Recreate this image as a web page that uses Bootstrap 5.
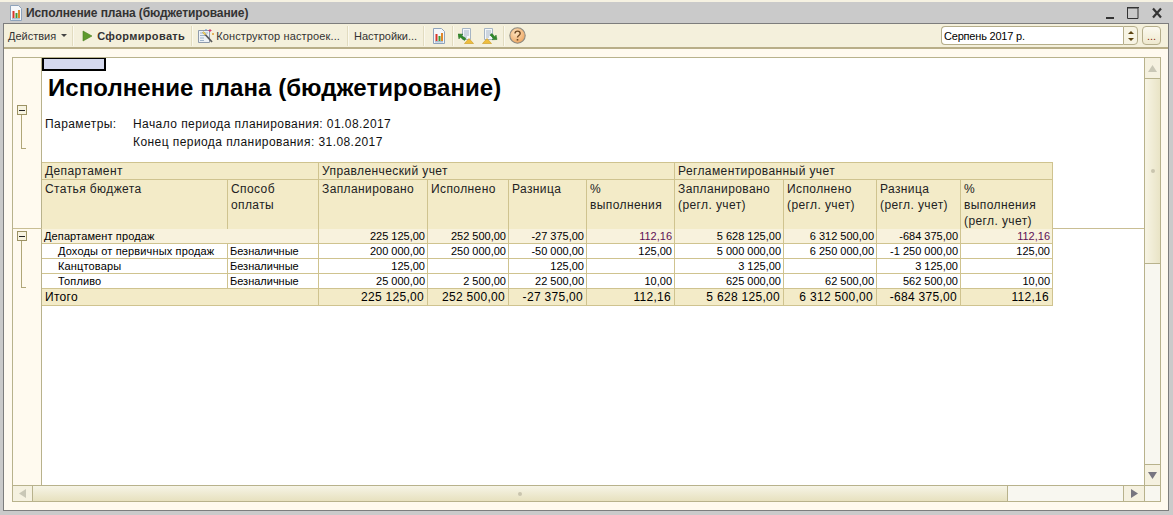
<!DOCTYPE html>
<html lang="ru">
<head>
    <meta charset="UTF-8">
    <meta name="viewport" content="width=device-width, initial-scale=1.0">
    <title>Исполнение плана (бюджетирование)</title>
    <link href="https://cdn.jsdelivr.net/npm/bootstrap@5.3.0/dist/css/bootstrap.min.css" rel="stylesheet">

    <style>
        html, body {
            height: 100%;
            overflow: hidden;
        }
        body {
            font-family: "Liberation Sans", Arial, sans-serif;
            font-size: 11px;
            color: #000;
            background-color: #cacaca;
        }
        .app-window {
            height: 515px;
            border-top: 2px solid #f6f2e2;
            padding: 0 4px 4px 3px;
        }
        .title-bar {
            height: 21px;
            flex: none;
            padding-left: 6px;
            color: #333;
            font-weight: bold;
            font-size: 12px;
            letter-spacing: -.1px;
        }
        .title-bar svg { margin-right: 3px; }
        .win-controls { margin-right: 3px; gap: 9px; }
        .form-body {
            border: 1px solid #7d7d7d;
            background-color: #fffaef;
            min-height: 0;
        }
        .tool-bar {
            height: 25px;
            flex: none;
            background-color: #f4f0dc;
            border-bottom: 2px solid #b8ae88;
            padding-left: 4px;
            padding-right: 6px;
        }
        .tool-btn {
            border: 0;
            border-radius: 0;
            padding: 0;
            font-size: 11px;
            line-height: 14px;
            color: #333;
            display: inline-flex;
            align-items: center;
            white-space: nowrap;
        }
        .tool-btn.dropdown-toggle::after {
            margin-left: 5px;
            border-top-width: 3px;
            border-left-width: 3px;
            border-right-width: 3px;
            border-top-color: #444;
            vertical-align: middle;
        }
        .run-btn { letter-spacing: .35px; }
        .wizard-btn { letter-spacing: .13px; }
        .wizard-btn svg { margin-right: 2px; }
        .tool-sep {
            width: 2px;
            height: 20px;
            flex: none;
            background-color: #e2dcc0;
            border-right: 1px solid #fbf9ee;
        }
        .sp-5 { margin-left: 5px; }
        .sp-6 { margin-left: 6px; }
        .sp-7 { margin-left: 7px; }
        .sp-8 { margin-left: 8px; }
        .sp-4 { margin-left: 4px; }
        .date-group { margin-right: 1px; }
        .date-input.form-control {
            width: 182px;
            height: 19px;
            padding: 0 2px;
            font-size: 11px;
            line-height: 17px;
            letter-spacing: -.2px;
            color: #000;
            border: 1px solid #b5ae8b;
            border-right: 0;
            border-radius: 4px 0 0 4px;
        }
        .date-spin {
            width: 15px;
            height: 19px;
            border: 1px solid #b5ae8b;
            border-radius: 0 4px 4px 0;
            background-color: #f7f4e4;
        }
        .spin-up, .spin-down {
            width: 0;
            height: 0;
            border-left: 3px solid transparent;
            border-right: 3px solid transparent;
        }
        .spin-up { border-bottom: 3px solid #5c4410; }
        .spin-down { border-top: 3px solid #5c4410; }
        .dots-btn {
            width: 19px;
            height: 19px;
            margin-left: 4px;
            border: 1px solid #b5ae8b;
            border-radius: 4px;
            background: linear-gradient(#fbf9ef, #efe9cf);
            color: #8a2b12;
            font-size: 11px;
            line-height: 12px;
            text-align: center;
        }
        .form-area {
            padding: 8px 7px 8px 8px;
            min-height: 0;
        }
        .sheet-frame {
            height: 100%;
            border: 1px solid #b8b28c;
            display: grid;
            grid-template-columns: 1fr 16px;
            grid-template-rows: 1fr 16px;
            background-color: #fff;
        }
        .sheet-view { min-width: 0; min-height: 0; }
        .sheet-top {
            height: 171px;
            flex: none;
            border-bottom: 1px solid #c9be94;
        }
        .gutter-col {
            width: 29px;
            flex: none;
            background-color: #fffaef;
            border-right: 1px solid #b8b28c;
            padding-left: 4px;
        }
        .gutter-top { padding-top: 47px; }
        .gutter-bottom { padding-top: 2px; }
        .fold-box {
            width: 10px;
            height: 10px;
            border: 1px solid #9c9264;
            background-color: #f7f3e0;
            display: flex;
            align-items: center;
            justify-content: center;
        }
        .fold-box::before {
            content: "";
            width: 6px;
            height: 1px;
            background-color: #222;
        }
        .fold-line {
            width: 5px;
            margin-left: 4px;
            border-left: 1px solid #b0a678;
            border-bottom: 1px solid #b0a678;
        }
        .gutter-top .fold-line { height: 34px; }
        .gutter-bottom .fold-line { height: 47px; }
        .sel-cell {
            width: 64px;
            height: 13px;
            flex: none;
            background-color: #d5d9ee;
            border: 2px solid #000;
            border-top-width: 1px;
        }
        .report-title {
            margin: 2px 0 0 6px;
            font-size: 24px;
            line-height: 30px;
            letter-spacing: .06px;
            font-weight: bold;
        }
        .report-params {
            margin: 12px 0 0 3px;
            font-size: 12px;
            line-height: 18px;
            letter-spacing: .43px;
            color: #111;
        }
        .param-label { width: 88px; }
        .report-table {
            table-layout: fixed;
            width: 1011px;
            border-collapse: separate;
            border-spacing: 0;
            color: #000;
        }
        .report-table col:nth-child(1) { width: 186px; }
        .report-table col:nth-child(2) { width: 91px; }
        .report-table col:nth-child(3) { width: 109px; }
        .report-table col:nth-child(4) { width: 81px; }
        .report-table col:nth-child(5) { width: 78px; }
        .report-table col:nth-child(6) { width: 88px; }
        .report-table col:nth-child(7) { width: 109px; }
        .report-table col:nth-child(8) { width: 93px; }
        .report-table col:nth-child(9) { width: 84px; }
        .report-table col:nth-child(10) { width: 92px; }
        .head-table {
            margin-top: 11px;
            background-color: #f3ebc8;
            font-size: 12px;
            line-height: 16px;
            letter-spacing: .4px;
            color: #222;
        }
        .head-table th {
            font-weight: normal;
            vertical-align: top;
            padding: 0 3px;
            border-right: 1px solid #cfc38f;
            white-space: nowrap;
        }
        .head-table .top-row th {
            height: 17px;
            border-top: 1px solid #cfc38f;
            border-bottom: 1px solid #cfc38f;
        }
        .head-table .sub-row th { height: 48px; padding-top: 1px; }
        .body-table td {
            height: 15px;
            padding: 0 2px;
            font-size: 11px;
            line-height: 14px;
            white-space: nowrap;
            border-right: 1px solid #cfc38f;
            border-bottom: 1px solid #cfc38f;
            color: #000;
        }
        .body-table .dept-row td { background-color: #f8f2dd; }
        .body-table .dept-name { letter-spacing: .12px; }
        .body-table .item-name { padding-left: 16px; letter-spacing: .15px; }
        .body-table .dept-row .pct-value { color: #5e1055; }
        .body-table .total-row td {
            height: 17px;
            background-color: #f3ebc8;
            font-size: 12px;
            line-height: 16px;
            letter-spacing: .3px;
            padding: 0 3px;
        }
        .v-scroll {
            border-left: 1px solid #b8b28c;
            background-color: #f8f7f0;
        }
        .scroll-btn {
            flex: none;
            background-color: #f5f1e0;
            display: flex;
            align-items: center;
            justify-content: center;
        }
        .v-scroll .scroll-btn { height: 21px; }
        .v-scroll .btn-up { border-bottom: 1px solid #b8b28c; }
        .v-scroll .btn-down { height: 21px; border-top: 1px solid #b8b28c; }
        .v-thumb {
            height: 185px;
            flex: none;
            background: linear-gradient(90deg, #f7f4e4, #e9e4c6);
            border-bottom: 1px solid #b8b28c;
        }
        .grip {
            width: 4px;
            height: 4px;
            border-radius: 50%;
            background-color: #c9c5ae;
        }
        .h-scroll {
            border-top: 1px solid #b8b28c;
            background-color: #f8f7f0;
        }
        .h-scroll .scroll-btn { width: 20px; }
        .h-scroll .btn-left { border-right: 1px solid #b8b28c; }
        .h-scroll .btn-right { width: 21px; border-left: 1px solid #b8b28c; }
        .h-thumb {
            width: 975px;
            flex: none;
            background: linear-gradient(#f6f4e6, #e7e1bf);
            border-right: 1px solid #b8b28c;
        }
        .scroll-corner {
            border-top: 1px solid #b8b28c;
            border-left: 1px solid #b8b28c;
            background-color: #f8f7f0;
        }
    </style>
</head>
<body>

<div class="app-window d-flex flex-column">
    <div class="title-bar d-flex align-items-center">
        <svg width="14" height="16" viewBox="0 0 14 16">
            <path d="M1.500 .5h8l3 3v12h-11z" fill="#f5f7fa" stroke="#8ea3bb"/>
            <path d="M3 13h8v1.500H3z" fill="#a9bdd2"/>
            <path d="M3.500 6h2v7h-2z" fill="#d8362a"/>
            <path d="M6.500 8h2v5h-2z" fill="#3f9a36"/>
            <path d="M9 5h2v8H9z" fill="#e0872a"/>
        </svg>
        <span>Исполнение плана (бюджетирование)</span>
        <div class="win-controls d-flex align-items-center ms-auto">
            <svg width="10" height="14" viewBox="0 0 10 14"><path d="M1 11h8v2H1z" fill="#333"/></svg>
            <svg width="12" height="12" viewBox="0 0 12 12"><path d="M.5 1v10.500h10.500V1z" fill="none" stroke="#333"/><path d="M0 .5h12" stroke="#333"/></svg>
            <svg width="12" height="12" viewBox="0 0 12 12"><path d="M2 1.500l8 9M10 1.500l-8 9" stroke="#333" stroke-width="2.200" fill="none"/></svg>
        </div>
    </div>

    <div class="form-body d-flex flex-column flex-grow-1">
        <div class="tool-bar d-flex align-items-center">
            <button type="button" class="btn tool-btn dropdown-toggle">Действия</button>
            <span class="tool-sep sp-5"></span>
            <button type="button" class="btn tool-btn run-btn fw-bold sp-8">
                <svg class="me-1" width="11" height="12" viewBox="0 0 11 12"><path d="M1 1l9 5-9 5z" fill="#5f9a2e" stroke="#4c8024" stroke-width=".6"/></svg>
                Сформировать
            </button>
            <span class="tool-sep sp-6"></span>
            <button type="button" class="btn tool-btn wizard-btn sp-5">
                <svg width="16" height="16" viewBox="0 0 16 16">
                    <path d="M.5 2.500h11v12H.5z" fill="#eef2f6" stroke="#8f9bac"/>
                    <path d="M2 5h8M2 7.500h6M2 10h4M2 12.500h4" stroke="#9fb3c8"/>
                    <path d="M5 4l9 10" stroke="#5a5a5a" stroke-width="1.800"/>
                    <path d="M5 4l2.500 2.700" stroke="#f0d060" stroke-width="1.800"/>
                    <path d="M12 1v3M10.500 2.500h3" stroke="#d63c6a"/>
                    <path d="M15 5v2M14 6h2" stroke="#e0a030"/>
                    <path d="M8 1v1.500" stroke="#4c8ad0"/>
                </svg>
                Конструктор настроек...
            </button>
            <span class="tool-sep sp-7"></span>
            <button type="button" class="btn tool-btn sp-5">Настройки...</button>
            <span class="tool-sep sp-6"></span>
            <svg class="sp-7" width="14" height="16" viewBox="0 0 14 16">
                <path d="M1.500 .5h8l3 3v12h-11z" fill="#f5f7fa" stroke="#8ea3bb"/>
                <path d="M3 13h8v1.500H3z" fill="#a9bdd2"/>
                <path d="M3.500 6h2v7h-2z" fill="#d8362a"/>
                <path d="M6.500 8h2v5h-2z" fill="#3f9a36"/>
                <path d="M9 5h2v8H9z" fill="#e0872a"/>
            </svg>
            <span class="tool-sep sp-6"></span>
            <svg class="sp-4" width="16" height="16" viewBox="0 0 16 16">
                <path d="M4.500 .5h8v11h-8z" fill="#f4f7fa" stroke="#a5b4c4"/>
                <path d="M6 3h5M6 5h5M6 7h5M6 9h3" stroke="#a5b4c4"/>
                <path d="M0 6l5 .2-1.500 1.300L8 10.500 6.500 12.500 2 9l-1 2z" fill="#2f8a2a" stroke="#1e6a1c" stroke-width=".5"/>
                <path d="M11 10.500l4.500 5h-9z" fill="#eebd3c" stroke="#c99820" stroke-width=".6"/>
            </svg>
            <svg class="sp-8" width="16" height="16" viewBox="0 0 16 16">
                <path d="M2.500 .5h8v11h-8z" fill="#f4f7fa" stroke="#a5b4c4"/>
                <path d="M4 3h5M4 5h5M4 7h5M4 9h3" stroke="#a5b4c4"/>
                <path d="M15 11.500l-5 .2 1.500-1.300L8 7l2-1.500L13 9l1-2z" fill="#2f8a2a" stroke="#1e6a1c" stroke-width=".5"/>
                <path d="M5 10.500l4.500 5h-9z" fill="#eebd3c" stroke="#c99820" stroke-width=".6"/>
            </svg>
            <span class="tool-sep sp-5"></span>
            <svg class="sp-4" width="17" height="17" viewBox="0 0 17 17">
                <defs>
                    <radialGradient id="helpFill" cx=".4" cy=".35" r=".8">
                        <stop offset="0" stop-color="#fde3be"/>
                        <stop offset="1" stop-color="#ea9a50"/>
                    </radialGradient>
                </defs>
                <circle cx="8.500" cy="8.500" r="7.700" fill="url(#helpFill)" stroke="#8d8b82" stroke-width="1.100"/>
                <path d="M6 6.500c0-3.200 5.200-3.200 5.200 0 0 2-2.700 2-2.700 4" fill="none" stroke="#6f4a24" stroke-width="1.400"/>
                <path d="M7.700 12h1.600v1.600H7.700z" fill="#6f4a24"/>
            </svg>

            <div class="date-group d-flex align-items-center ms-auto">
                <input type="text" class="form-control date-input" value="Серпень 2017 р.">
                <div class="date-spin d-flex flex-column align-items-center justify-content-center gap-1">
                    <span class="spin-up"></span>
                    <span class="spin-down"></span>
                </div>
                <button type="button" class="btn dots-btn p-0">...</button>
            </div>
        </div>

        <div class="form-area flex-grow-1">
            <div class="sheet-frame">
                <div class="sheet-view d-flex flex-column">
                    <div class="sheet-top d-flex">
                        <div class="gutter-col gutter-top">
                            <div class="fold-box"></div>
                            <div class="fold-line"></div>
                        </div>
                        <div class="d-flex flex-column flex-grow-1">
                            <div class="sel-cell"></div>
                            <div class="report-title">Исполнение плана (бюджетирование)</div>
                            <div class="report-params d-flex">
                                <div class="param-label">Параметры:</div>
                                <div>
                                    <div>Начало периода планирования: 01.08.2017</div>
                                    <div>Конец периода планирования: 31.08.2017</div>
                                </div>
                            </div>
                            <table class="report-table head-table">
                                <colgroup><col><col><col><col><col><col><col><col><col><col></colgroup>
                                <tr class="top-row">
                                    <th colspan="2">Департамент</th>
                                    <th colspan="4">Управленческий учет</th>
                                    <th colspan="4">Регламентированный учет</th>
                                </tr>
                                <tr class="sub-row">
                                    <th>Статья бюджета</th>
                                    <th>Способ<br>оплаты</th>
                                    <th>Запланировано</th>
                                    <th>Исполнено</th>
                                    <th>Разница</th>
                                    <th>%<br>выполнения</th>
                                    <th>Запланировано<br>(регл. учет)</th>
                                    <th>Исполнено<br>(регл. учет)</th>
                                    <th>Разница<br>(регл. учет)</th>
                                    <th>%<br>выполнения<br>(регл. учет)</th>
                                </tr>
                            </table>
                        </div>
                    </div>
                    <div class="d-flex flex-grow-1">
                        <div class="gutter-col gutter-bottom">
                            <div class="fold-box"></div>
                            <div class="fold-line"></div>
                        </div>
                        <div>
                            <table class="report-table body-table">
                                <colgroup><col><col><col><col><col><col><col><col><col><col></colgroup>
                                <tr class="dept-row">
                                    <td class="dept-name" colspan="2">Департамент продаж</td>
                                    <td class="text-end">225 125,00</td>
                                    <td class="text-end">252 500,00</td>
                                    <td class="text-end">-27 375,00</td>
                                    <td class="text-end pct-value">112,16</td>
                                    <td class="text-end">5 628 125,00</td>
                                    <td class="text-end">6 312 500,00</td>
                                    <td class="text-end">-684 375,00</td>
                                    <td class="text-end pct-value">112,16</td>
                                </tr>
                                <tr>
                                    <td class="item-name">Доходы от первичных продаж</td>
                                    <td>Безналичные</td>
                                    <td class="text-end">200 000,00</td>
                                    <td class="text-end">250 000,00</td>
                                    <td class="text-end">-50 000,00</td>
                                    <td class="text-end">125,00</td>
                                    <td class="text-end">5 000 000,00</td>
                                    <td class="text-end">6 250 000,00</td>
                                    <td class="text-end">-1 250 000,00</td>
                                    <td class="text-end">125,00</td>
                                </tr>
                                <tr>
                                    <td class="item-name">Канцтовары</td>
                                    <td>Безналичные</td>
                                    <td class="text-end">125,00</td>
                                    <td></td>
                                    <td class="text-end">125,00</td>
                                    <td></td>
                                    <td class="text-end">3 125,00</td>
                                    <td></td>
                                    <td class="text-end">3 125,00</td>
                                    <td></td>
                                </tr>
                                <tr>
                                    <td class="item-name">Топливо</td>
                                    <td>Безналичные</td>
                                    <td class="text-end">25 000,00</td>
                                    <td class="text-end">2 500,00</td>
                                    <td class="text-end">22 500,00</td>
                                    <td class="text-end">10,00</td>
                                    <td class="text-end">625 000,00</td>
                                    <td class="text-end">62 500,00</td>
                                    <td class="text-end">562 500,00</td>
                                    <td class="text-end">10,00</td>
                                </tr>
                                <tr class="total-row">
                                    <td colspan="2">Итого</td>
                                    <td class="text-end">225 125,00</td>
                                    <td class="text-end">252 500,00</td>
                                    <td class="text-end">-27 375,00</td>
                                    <td class="text-end">112,16</td>
                                    <td class="text-end">5 628 125,00</td>
                                    <td class="text-end">6 312 500,00</td>
                                    <td class="text-end">-684 375,00</td>
                                    <td class="text-end">112,16</td>
                                </tr>
                            </table>
                        </div>
                    </div>
                </div>

                <div class="v-scroll d-flex flex-column">
                    <div class="scroll-btn btn-up">
                        <svg width="11" height="9" viewBox="0 0 11 9"><path d="M5.500 1l4.500 7H1z" fill="#c9c7b6"/></svg>
                    </div>
                    <div class="v-thumb d-flex align-items-center justify-content-center"><span class="grip"></span></div>
                    <div class="scroll-btn btn-down mt-auto">
                        <svg width="11" height="9" viewBox="0 0 11 9"><path d="M5.500 8L10 1H1z" fill="#77757f"/></svg>
                    </div>
                </div>

                <div class="h-scroll d-flex">
                    <div class="scroll-btn btn-left">
                        <svg width="9" height="11" viewBox="0 0 9 11"><path d="M1 5.500L8 1v9z" fill="#c9c7b6"/></svg>
                    </div>
                    <div class="h-thumb d-flex align-items-center justify-content-center"><span class="grip"></span></div>
                    <div class="scroll-btn btn-right ms-auto">
                        <svg width="9" height="11" viewBox="0 0 9 11"><path d="M8 5.500L1 1v9z" fill="#77757f"/></svg>
                    </div>
                </div>
                <div class="scroll-corner"></div>
            </div>
        </div>
    </div>
</div>

<script src="https://cdn.jsdelivr.net/npm/bootstrap@5.3.0/dist/js/bootstrap.bundle.min.js"></script>
</body>
</html>
